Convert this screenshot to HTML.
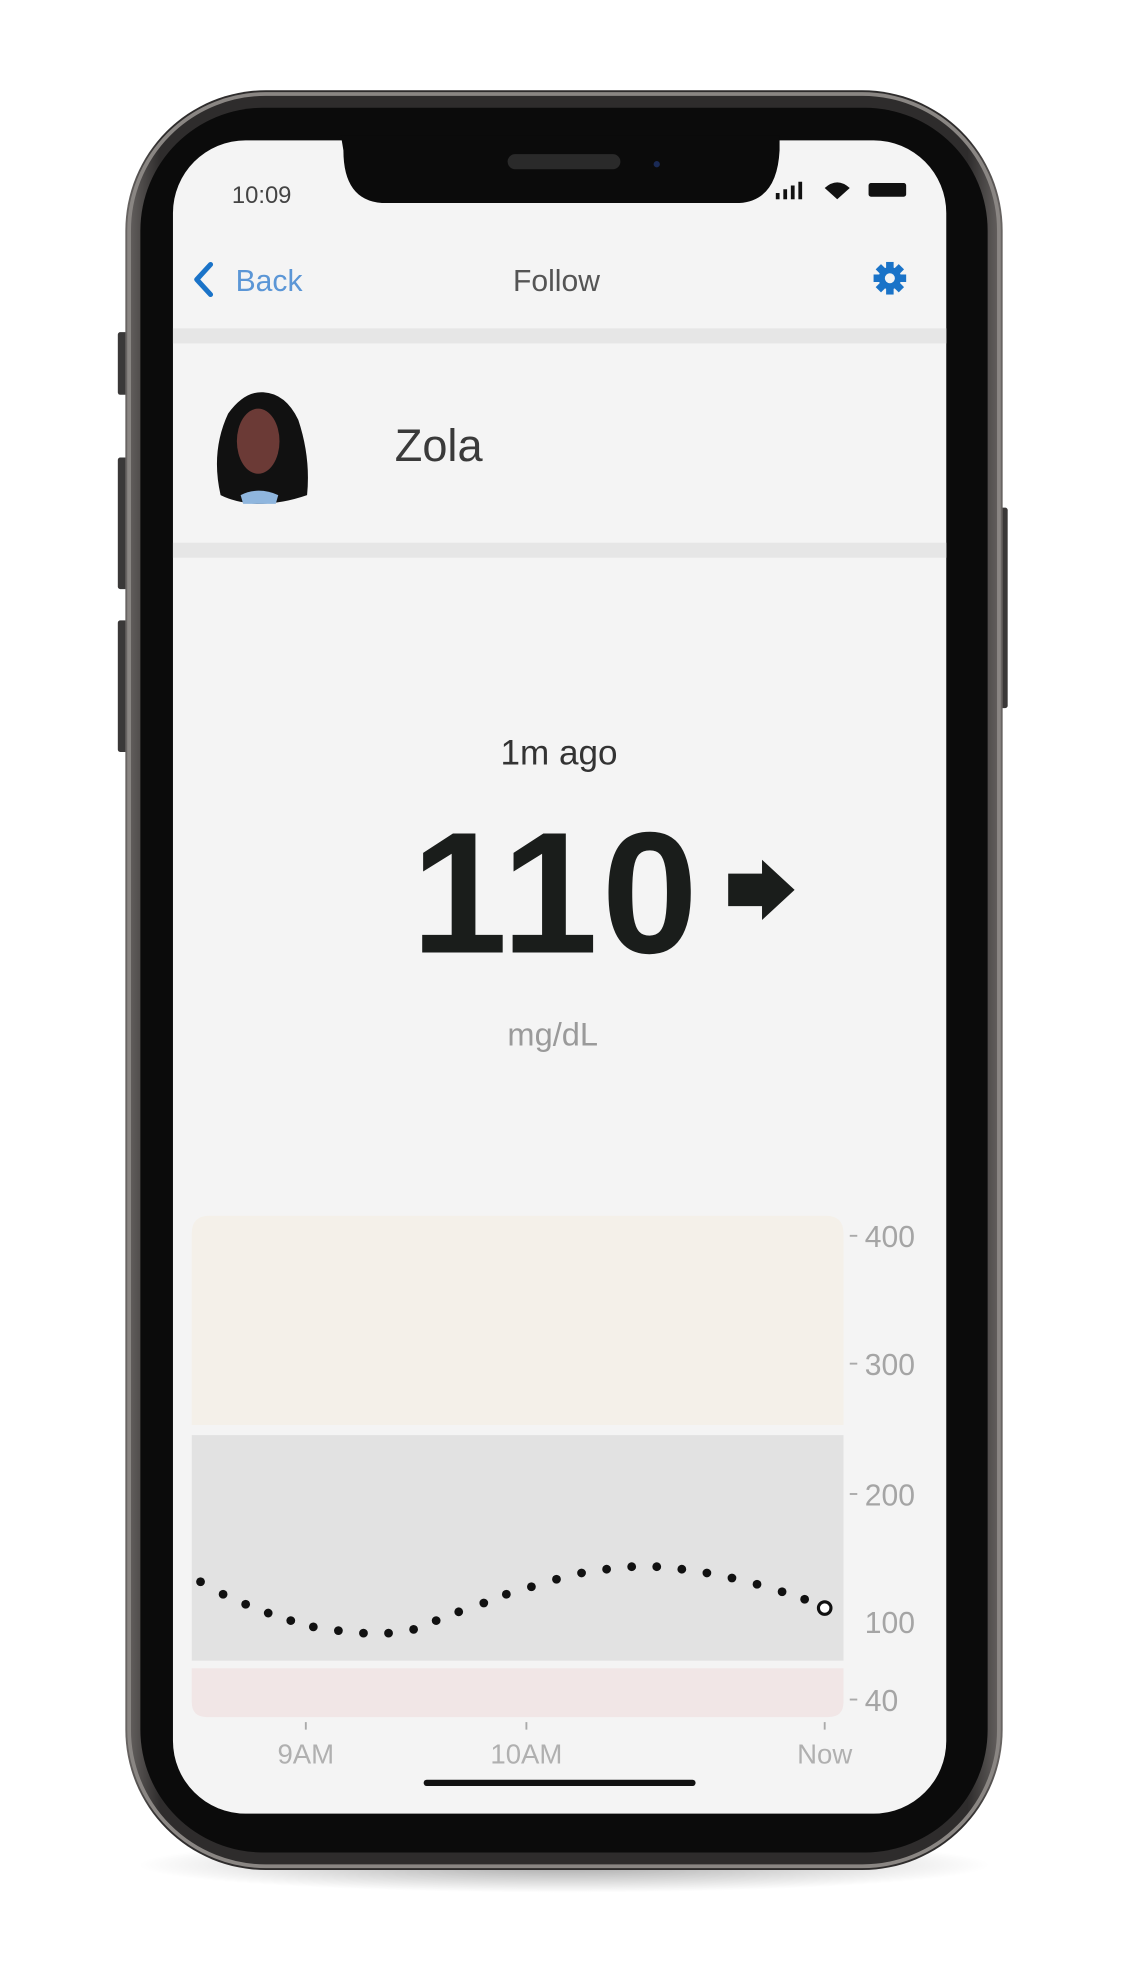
<!DOCTYPE html>
<html><head><meta charset="utf-8"><style>
html,body{margin:0;padding:0;background:#fff;width:1128px;height:1964px;overflow:hidden}
svg{display:block}
text{font-family:"Liberation Sans",sans-serif}
</style></head><body>
<svg width="1128" height="1964" viewBox="0 0 900 1567" preserveAspectRatio="none">
<defs>
<linearGradient id="fr" x1="0" x2="1" y1="0" y2="0">
<stop offset="0" stop-color="#6a6664"/><stop offset="0.04" stop-color="#2e2c2c"/><stop offset="0.96" stop-color="#2e2c2c"/><stop offset="1" stop-color="#6a6664"/>
</linearGradient>
<radialGradient id="sh" cx="0.5" cy="0.5" r="0.5"><stop offset="0" stop-color="#000" stop-opacity="0.35"/><stop offset="1" stop-color="#000" stop-opacity="0"/></radialGradient>
</defs>
<ellipse cx="450" cy="1488" rx="340" ry="22" fill="url(#sh)"/>
<rect x="94" y="265" width="8" height="50" rx="2" fill="#3a3838"/>
<rect x="94" y="365" width="8" height="105" rx="2" fill="#3a3838"/>
<rect x="94" y="495" width="8" height="105" rx="2" fill="#3a3838"/>
<rect x="796" y="405" width="8" height="160" rx="2" fill="#3a3838"/>
<rect x="100" y="72" width="700" height="1420" rx="112" fill="url(#fr)"/>
<rect x="103" y="75" width="694" height="1414" rx="109" fill="none" stroke="#8a8683" stroke-width="3"/>
<rect x="112" y="86" width="676" height="1392" rx="98" fill="#0b0b0b"/>
<rect x="138" y="112" width="617" height="1335" rx="58" fill="#f4f4f4"/>
<path d="M272 108 L622 108 L622 120 Q620 160 590 162 L305 162 Q274 160 274 120 Z" fill="#0b0b0b"/>
<rect x="405" y="123" width="90" height="12" rx="6" fill="#2a2a2a"/>
<circle cx="524" cy="131" r="2.5" fill="#1a2a55"/>
<text x="185" y="162" font-size="19" fill="#444">10:09</text>
<rect x="619" y="154" width="3" height="5" fill="#111"/><rect x="625" y="151" width="3" height="8" fill="#111"/><rect x="631" y="148" width="3" height="11" fill="#111"/><rect x="637" y="145" width="3" height="14" fill="#111"/>
<path d="M658 150 Q668 141 678 150 L668 159 Z" fill="#111"/>
<rect x="693" y="146" width="30" height="11" rx="2" fill="#111"/>
<path d="M168 211 L157 223 L168 235" fill="none" stroke="#1a73c8" stroke-width="4" stroke-linecap="round" stroke-linejoin="round"/>
<text x="188" y="232" font-size="24" fill="#5b96d6">Back</text>
<text x="444" y="232" font-size="24" fill="#555" text-anchor="middle">Follow</text>
<g transform="translate(710,222)" fill="#1a73c8">
<circle r="9"/>
<rect x="-3" y="-13" width="6" height="26"/><rect x="-13" y="-3" width="26" height="6"/>
<rect x="-3" y="-13" width="6" height="26" transform="rotate(45)"/><rect x="-3" y="-13" width="6" height="26" transform="rotate(-45)"/>
<circle r="4" fill="#f4f4f4"/>
</g>
<rect x="138" y="262" width="617" height="12" fill="#e6e6e6"/>
<path d="M176 395 Q168 360 182 330 Q195 312 210 313 Q228 314 238 335 Q248 365 245 395 Q225 402 205 402 Q188 401 176 395 Z" fill="#111"/>
<ellipse cx="206" cy="352" rx="17" ry="26" fill="#6b3a36"/>
<path d="M192 395 Q206 388 222 395 L220 402 L194 402 Z" fill="#8fb6de"/>
<text x="315" y="368" font-size="36" fill="#3a3a3a">Zola</text>
<rect x="138" y="433" width="617" height="12" fill="#e6e6e6"/>
<text x="446" y="610" font-size="28" fill="#333" text-anchor="middle">1m ago</text>
<text x="444" y="760" font-size="138" font-weight="bold" fill="#1a1d1b" text-anchor="middle" letter-spacing="3">110</text>
<path d="M581 697 L608 697 L608 686 L634 710 L608 734 L608 723 L581 723 Z" fill="#1a1d1b"/>
<text x="441" y="834" font-size="26" fill="#9a9a9a" text-anchor="middle">mg/dL</text>
<path d="M153 984 Q153 970 167 970 L659 970 Q673 970 673 984 L673 1137 L153 1137 Z" fill="#f4f0e9"/>
<rect x="153" y="1145" width="520" height="180" fill="#e2e2e2"/>
<path d="M153 1331 L673 1331 L673 1358 Q673 1370 661 1370 L165 1370 Q153 1370 153 1358 Z" fill="#f1e6e6"/>
<g stroke="#aaa" stroke-width="1.5">
<line x1="678" y1="986" x2="684" y2="986"/><line x1="678" y1="1088" x2="684" y2="1088"/><line x1="678" y1="1192" x2="684" y2="1192"/><line x1="678" y1="1356" x2="684" y2="1356"/>
<line x1="244" y1="1374" x2="244" y2="1380"/><line x1="420" y1="1374" x2="420" y2="1380"/><line x1="658" y1="1374" x2="658" y2="1380"/>
</g>
<g font-size="24" fill="#a5a5a5">
<text x="690" y="995">400</text><text x="690" y="1097">300</text><text x="690" y="1201">200</text><text x="690" y="1303">100</text><text x="690" y="1365">40</text>
</g>
<g font-size="22" fill="#b0b0b0" text-anchor="middle">
<text x="244" y="1407">9AM</text><text x="420" y="1407">10AM</text><text x="658" y="1407">Now</text>
</g>
<g fill="#111">
<circle cx="160" cy="1262" r="3.5"/><circle cx="178" cy="1272" r="3.5"/><circle cx="196" cy="1280" r="3.5"/><circle cx="214" cy="1287" r="3.5"/><circle cx="232" cy="1293" r="3.5"/><circle cx="250" cy="1298" r="3.5"/><circle cx="270" cy="1301" r="3.5"/><circle cx="290" cy="1303" r="3.5"/><circle cx="310" cy="1303" r="3.5"/><circle cx="330" cy="1300" r="3.5"/><circle cx="348" cy="1293" r="3.5"/><circle cx="366" cy="1286" r="3.5"/><circle cx="386" cy="1279" r="3.5"/><circle cx="404" cy="1272" r="3.5"/><circle cx="424" cy="1266" r="3.5"/><circle cx="444" cy="1260" r="3.5"/><circle cx="464" cy="1255" r="3.5"/><circle cx="484" cy="1252" r="3.5"/><circle cx="504" cy="1250" r="3.5"/><circle cx="524" cy="1250" r="3.5"/><circle cx="544" cy="1252" r="3.5"/><circle cx="564" cy="1255" r="3.5"/><circle cx="584" cy="1259" r="3.5"/><circle cx="604" cy="1264" r="3.5"/><circle cx="624" cy="1270" r="3.5"/><circle cx="642" cy="1276" r="3.5"/>
</g>
<circle cx="658" cy="1283" r="5" fill="#fff" stroke="#111" stroke-width="2.5"/>
<rect x="338" y="1420" width="217" height="5" rx="2.5" fill="#111"/>
</svg>
</body></html>
